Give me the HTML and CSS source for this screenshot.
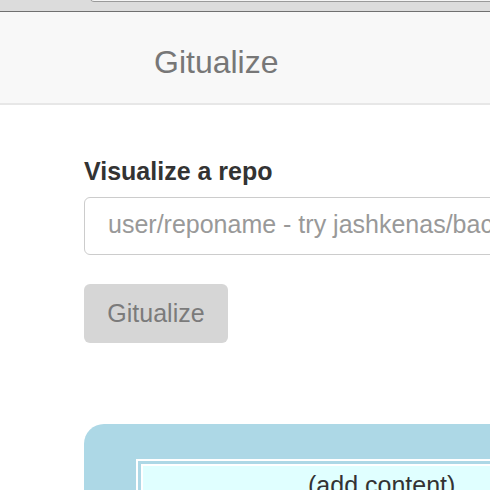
FILE: index.html
```html
<!DOCTYPE html>
<html>
<head>
<meta charset="utf-8">
<title>Gitualize</title>
<link rel="stylesheet" href="styles.css">
</head>
<body>
<div class="chrome"><div class="addressbar"></div></div>
<nav class="navbar"><span class="brand">Gitualize</span></nav>
<main class="main">
  <label class="label" for="repo">Visualize a repo</label>
  <input class="input" id="repo" type="text" placeholder="user/reponame - try jashkenas/backbone">
  <button class="btn" type="button">Gitualize</button>
  <section class="viz">
    <div class="frame">
      <div class="node">(add content)</div>
    </div>
  </section>
</main>
</body>
</html>
```
FILE: styles.css
```css
* { box-sizing: border-box; }
html, body { margin: 0; padding: 0; }
body {
  width: 490px;
  height: 490px;
  overflow: hidden;
  background: #fff;
  font-family: "Liberation Sans", Arial, sans-serif;
}
.chrome {
  height: 12px;
  background: #dcdcdc;
  border-bottom: 1px solid #707070;
  padding-left: 89px;
  overflow: hidden;
}
.addressbar {
  height: 22px;
  margin-top: -20px;
  width: 800px;
  background: #f4f4f4;
  border: 1px solid #9a9a9a;
  border-radius: 5px;
}
.navbar {
  height: 93px;
  background: #f8f8f8;
  border-bottom: 2px solid #e7e7e7;
  padding: 9px 0 0 154px;
}
.brand {
  display: block;
  font-size: 32px;
  line-height: 82px;
  color: #777;
}
.main {
  padding: 51px 0 0 84px;
  width: 900px;
}
.label {
  display: block;
  font-weight: bold;
  font-size: 25px;
  line-height: 30px;
  color: #333;
  margin-bottom: 11px;
}
.input {
  display: block;
  width: 700px;
  height: 58px;
  padding: 0 20px 4px 23px;
  border: 1px solid #cccccc;
  border-radius: 6px;
  font-family: inherit;
  font-size: 25px;
  color: #555;
  background: #fff;
  outline: none;
}
.input::placeholder { color: #999; }
.btn {
  display: block;
  margin-top: 29px;
  width: 144px;
  height: 59px;
  padding: 0;
  border: none;
  border-radius: 6px;
  background: #d6d6d6;
  color: #7b7b7b;
  font-family: inherit;
  font-size: 25px;
  text-align: center;
}
.viz {
  margin-top: 81px;
  width: 800px;
  height: 300px;
  background: #add8e6;
  border-radius: 20px;
  padding: 35px 0 0 52px;
}
.frame {
  width: 640px;
  border: 2px solid #fff;
  padding: 3px 0 0 3px;
}
.node {
  background: #e0ffff;
  border-top: 2px solid #fff;
  border-left: 2px solid #fff;
  height: 200px;
  padding: 4px 0 0 165px;
  font-size: 25px;
  line-height: 30px;
  color: #333;
}
```
